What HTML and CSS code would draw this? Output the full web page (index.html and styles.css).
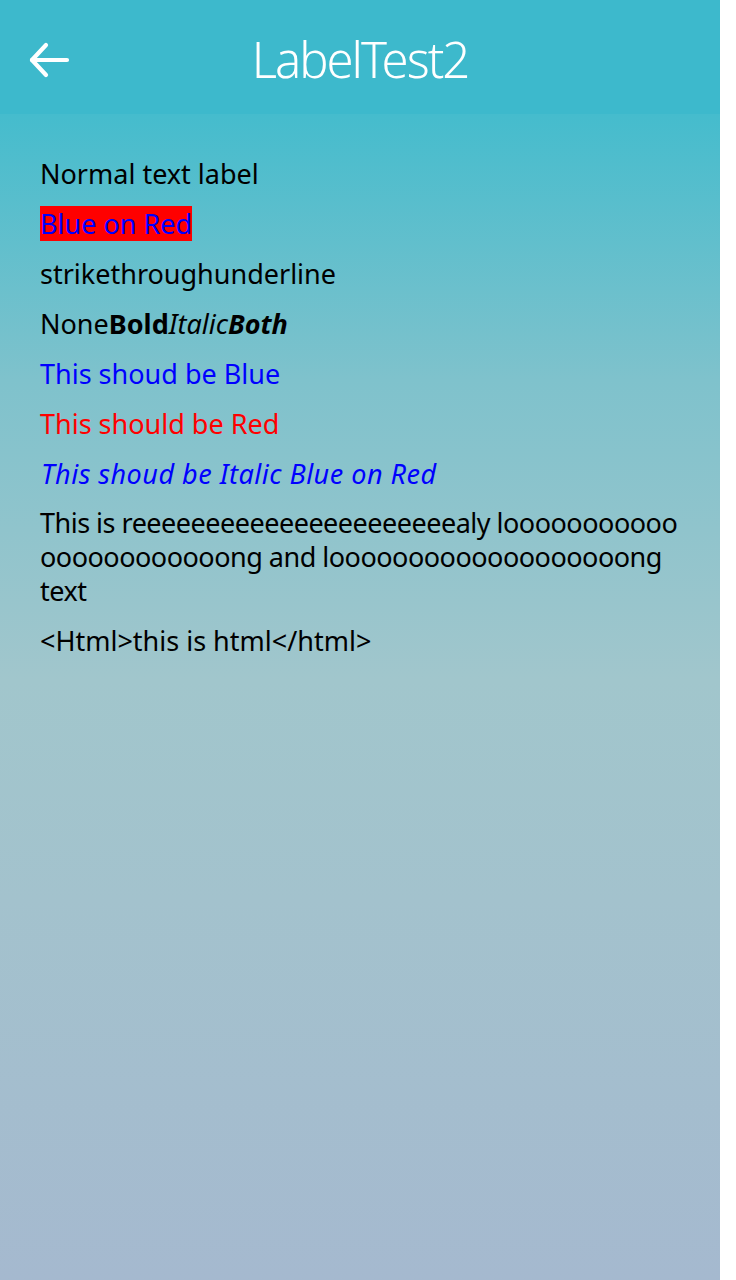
FILE: index.html
```html
<!DOCTYPE html>
<html lang="en">
<head>
<meta charset="utf-8">
<title>LabelTest2</title>
<link rel="stylesheet" href="styles.css">
</head>
<body>
<div class="app">
  <header class="header">
    <button class="back" aria-label="Back">
      <svg width="44" height="40" viewBox="0 0 44 40" fill="none" stroke="#ffffff" stroke-width="4.2" stroke-linecap="round" stroke-linejoin="round">
        <path d="M5 20 H40"/>
        <path d="M19 5 L5 20 L19 35"/>
      </svg>
    </button>
    <h1 class="title">LabelTest2</h1>
  </header>
  <main class="content">
    <div class="label">Normal text label</div>
    <div class="label"><span class="blue-on-red">Blue on Red</span></div>
    <div class="label">strikethroughunderline</div>
    <div class="label">None<b class="bold">Bold</b><i class="italic">Italic</i><b class="both">Both</b></div>
    <div class="label blue">This shoud be Blue</div>
    <div class="label red">This should be Red</div>
    <div class="label blue italic-label">This shoud be Italic Blue on Red</div>
    <div class="label long">This is reeeeeeeeeeeeeeeeeeeeeealy looooooooooo<br>oooooooooooong and looooooooooooooooooong<br>text</div>
    <div class="label">&lt;Html&gt;this is html&lt;/html&gt;</div>
  </main>
</div>
</body>
</html>
```

FILE: styles.css
```css
html, body {
  margin: 0;
  padding: 0;
  background: #ffffff;
}

body {
  font-family: "Noto Sans", "Open Sans", sans-serif;
}

.app {
  width: 720px;
  height: 1280px;
  display: flex;
  flex-direction: column;
  background: linear-gradient(to bottom, #45bccd 114px, #7fc2cc 380px, #a1c6cc 680px, #a3c2cd 900px, #a5b9cf 1280px);
}

.header {
  height: 114px;
  flex: none;
  background: #3db9cc;
  display: flex;
  align-items: center;
  justify-content: center;
  position: relative;
}

.back {
  position: absolute;
  left: 27px;
  top: 40px;
  width: 44px;
  height: 40px;
  padding: 0;
  border: 0;
  background: none;
  display: flex;
}

.title {
  margin: 0;
  color: #ffffff;
  font-family: "Noto Sans", "Open Sans", sans-serif;
  font-weight: 300;
  font-size: 49px;
  letter-spacing: -2px;
  line-height: 60px;
  transform: translateY(2px);
}

.content {
  padding: 42px 40px 0 40px;
  display: flex;
  flex-direction: column;
  gap: 15px;
}

.label {
  font-size: 27px;
  line-height: 35px;
  color: #000000;
  white-space: nowrap;
}

.blue-on-red {
  background: #ff0000;
  color: #0000ff;
  display: inline-block;
  height: 35px;
}

.bold {
  font-weight: 700;
}

.italic {
  font-style: italic;
  font-weight: 400;
}

.both {
  font-weight: 700;
  font-style: italic;
}

.blue {
  color: #0000ff;
}

.red {
  color: #ff0000;
}

.italic-label {
  font-style: italic;
  padding-left: 1px;
  letter-spacing: 0.5px;
}

.long {
  line-height: 34px;
  letter-spacing: -0.5px;
}
```
